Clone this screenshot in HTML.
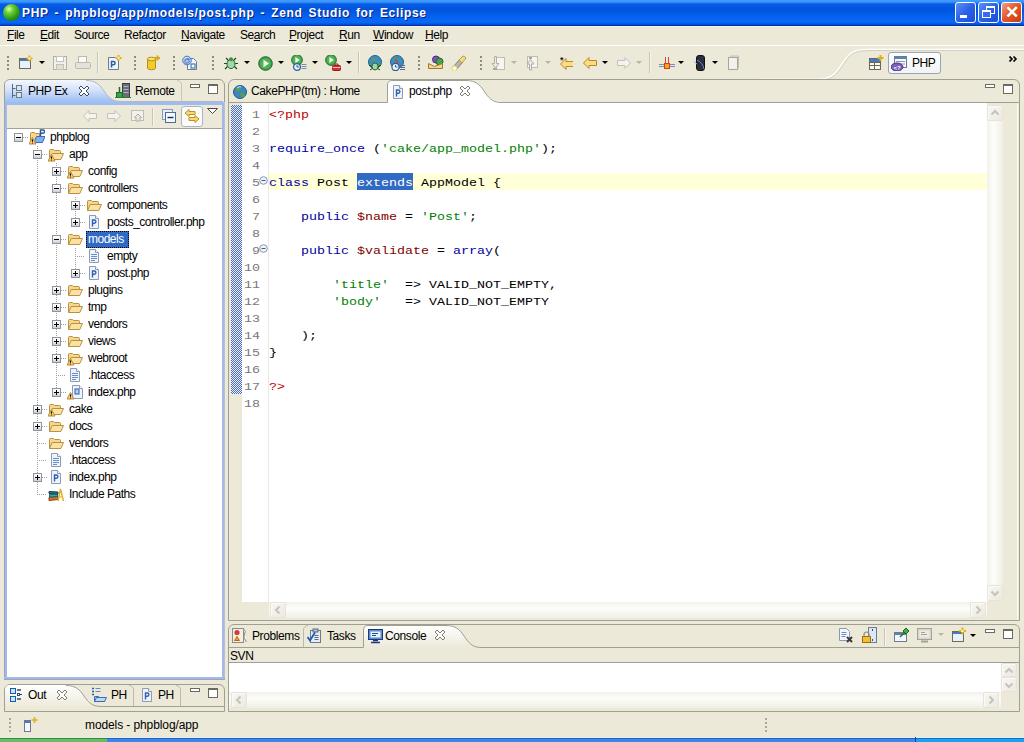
<!DOCTYPE html>
<html><head><meta charset="utf-8">
<style>
*{margin:0;padding:0;box-sizing:border-box}
html,body{width:1024px;height:742px;overflow:hidden;background:#ECE9D8;font-family:"Liberation Sans",sans-serif;font-size:12px;color:#000;position:relative}
.a{position:absolute}
.t{position:absolute;white-space:nowrap;line-height:14px;letter-spacing:-0.4px}
#title{left:0;top:0;width:1024px;height:26px;background:linear-gradient(#3d9dff 0,#3a95fc 2px,#0a5ce4 4px,#0054dc 10px,#0560ee 16px,#0a68f8 22px,#0458e4 24px,#0036a8 25.5px,#0030a0 26px)}
#title .tx{left:22px;top:6px;color:#fff;font-weight:bold;font-size:12px;letter-spacing:0.67px;word-spacing:2px;text-shadow:1px 1px 0 #0a1e80}
.wb{position:absolute;top:2px;width:21px;height:21px;border:1px solid #fff;border-radius:3px;background:linear-gradient(135deg,#5e8ff8,#2a62e6 50%,#1d4fd6)}
.menu .t{top:28px;font-size:12px;letter-spacing:-0.45px}
.u{text-decoration:underline}
.grip{position:absolute;width:2px;background:repeating-linear-gradient(#8e8b7c 0 2px,transparent 2px 4px)}
.vsep{position:absolute;width:2px;border-left:1px solid #c8c5b4;border-right:1px solid #f6f5ee}
.dd{position:absolute;width:0;height:0;border-left:3px solid transparent;border-right:3px solid transparent;border-top:3px solid #000}
.ddg{border-top-color:#b8b5a6}
.tree{font-size:12px;letter-spacing:-0.5px}
.exp{width:9px;height:9px;border:1px solid #8e949a;background:linear-gradient(#fff,#eef0f4 50%,#c8ccd4);}
.exp i{position:absolute;left:1px;top:3px;width:5px;height:1px;background:#000}
.exp b{position:absolute;left:3px;top:1px;width:1px;height:5px;background:#000}
.code{position:absolute;left:269px;font-family:"Liberation Mono",monospace;font-size:13.33px;line-height:17px;white-space:pre;color:#000;transform:scaleY(0.88);transform-origin:0 12px}
.ln{position:absolute;left:236px;width:24px;text-align:right;font-family:"Liberation Mono",monospace;font-size:13.33px;line-height:17px;color:#787878;transform:scaleY(0.88);transform-origin:0 12px}
.kw{color:#0000a0}.st{color:#008000}.vr{color:#800000}.tg{color:#c00000}
</style></head><body>

<!-- Title bar -->
<div id="title" class="a">
  <div class="a" style="left:3px;top:4px;width:17px;height:17px;border-radius:50%;background:radial-gradient(circle at 35% 30%,#d8ffb0 0,#6fd13a 25%,#2e9a12 60%,#0f5a05 100%)"></div>
  <div class="t tx">PHP - phpblog/app/models/post.php - Zend Studio for Eclipse</div>
  <div class="wb" style="left:955px"><div class="a" style="left:4px;top:12px;width:7px;height:3px;background:#fff"></div></div>
  <div class="wb" style="left:978px"><div class="a" style="left:7px;top:3px;width:9px;height:8px;border:1px solid #fff;border-top-width:2px"></div><div class="a" style="left:3px;top:7px;width:9px;height:8px;border:1px solid #fff;border-top-width:2px;background:#3a6bea"></div></div>
  <div class="wb" style="left:1001px;background:linear-gradient(135deg,#f0a080,#e55a2a 45%,#c83a10)"><div class="t" style="left:0;top:1px;width:19px;text-align:center;color:#fff;font-size:17px;font-weight:bold;line-height:18px">✕</div></div>
</div>

<!-- Menu -->
<div class="menu">
  <div class="t" style="left:7px"><span class="u">F</span>ile</div>
  <div class="t" style="left:40px"><span class="u">E</span>dit</div>
  <div class="t" style="left:74px">Source</div>
  <div class="t" style="left:124px">Refac<span class="u">t</span>or</div>
  <div class="t" style="left:181px"><span class="u">N</span>avigate</div>
  <div class="t" style="left:240px">Se<span class="u">a</span>rch</div>
  <div class="t" style="left:289px"><span class="u">P</span>roject</div>
  <div class="t" style="left:339px"><span class="u">R</span>un</div>
  <div class="t" style="left:373px"><span class="u">W</span>indow</div>
  <div class="t" style="left:425px"><span class="u">H</span>elp</div>
</div>
<div class="a" style="left:0;top:45px;width:1024px;height:1px;background:#fff"></div>
<div class="a" style="left:0;top:26px;width:1024px;height:1px;background:#f4f3ee"></div>

<!-- TOOLBAR -->
<div class="grip" style="left:7px;top:56px;height:14px"></div>
<svg class="a" style="left:18px;top:55px" width="16" height="16" viewBox="0 0 16 16"><rect x="1.5" y="3.5" width="11" height="10" fill="#e8f2fc" stroke="#6e6a58"/><rect x="2" y="4" width="10" height="2" fill="#4a7ab8"/><path d="M11.5,0.5 v6 M8.5,3.5 h6" stroke="#e0b020" stroke-width="2"/><circle cx="11.5" cy="3.5" r="1.2" fill="#fff6a0"/></svg>
<div class="dd" style="left:39px;top:61px"></div>
<svg class="a" style="left:52px;top:55px" width="16" height="16" viewBox="0 0 16 16"><rect x="1.5" y="1.5" width="13" height="13" fill="#f0efe8" stroke="#b4b2a8"/><rect x="4.5" y="1.5" width="7" height="5" fill="#fff" stroke="#c4c2b8"/><rect x="4.5" y="9.5" width="7" height="5" fill="#e0dfd6" stroke="#c4c2b8"/></svg>
<svg class="a" style="left:75px;top:55px" width="16" height="16" viewBox="0 0 16 16"><rect x="3.5" y="1.5" width="8" height="6" fill="#fafaf6" stroke="#bdbbb0"/><rect x="0.5" y="7.5" width="15" height="6" rx="1" fill="#e4e2da" stroke="#bdbbb0"/></svg>
<div class="vsep" style="left:97px;top:52px;height:21px"></div>
<svg class="a" style="left:106px;top:55px" width="16" height="16" viewBox="0 0 16 16"><path d="M2.5,2.5 h7 l3,3 v9 h-10 z" fill="#eef4fc" stroke="#6e7a90"/><path d="M5.5,12.5 V6.5 h2 a1.6,1.6 0 0 1 0,3.2 h-2" fill="none" stroke="#2d5ea8" stroke-width="1.5"/><path d="M12.5,0 v6 M9.5,3 h6" stroke="#e0b020" stroke-width="2"/><circle cx="12.5" cy="3" r="1.2" fill="#fff6a0"/></svg>
<div class="grip" style="left:134px;top:56px;height:14px"></div>
<svg class="a" style="left:145px;top:55px" width="16" height="16" viewBox="0 0 16 16"><path d="M2.5,4 v9 a4,1.8 0 0 0 8,0 v-9" fill="#f0cc30" stroke="#b89010"/><ellipse cx="6.5" cy="4" rx="4" ry="1.8" fill="#fae27a" stroke="#b89010"/><path d="M12.5,0.5 v5 M10,3 h5" stroke="#d8a818" stroke-width="2"/></svg>
<div class="grip" style="left:173px;top:56px;height:14px"></div>
<svg class="a" style="left:182px;top:55px" width="16" height="16" viewBox="0 0 16 16"><path d="M5.5,3.5 h6 l3,3 v8 h-9 z" fill="#f4f8fc" stroke="#6e7a90"/><rect x="9" y="9" width="4" height="4" fill="#fff" stroke="#2d5ea8"/><circle cx="5" cy="5.5" r="4.3" fill="#cfe2f8" stroke="#3a78c8"/><text x="5" y="8" font-size="7" font-family="Liberation Sans" text-anchor="middle" fill="#1a4a98">@</text></svg>
<div class="grip" style="left:212px;top:56px;height:14px"></div>
<svg class="a" style="left:223px;top:55px" width="16" height="16" viewBox="0 0 16 16"><path d="M3,3 l3,3 M13,3 l-3,3 M1,8.5 h3 M15,8.5 h-3 M2,14 l3,-3 M14,14 l-3,-3" stroke="#1e4a1e" stroke-width="1.2"/><ellipse cx="8" cy="9" rx="4" ry="4.6" fill="#9fd8a8" stroke="#2a6a2a"/><circle cx="8" cy="4.3" r="2" fill="#4a8a4a"/></svg>
<div class="dd" style="left:244px;top:61px"></div>
<svg class="a" style="left:258px;top:56px" width="16" height="16" viewBox="0 0 16 16"><circle cx="7.5" cy="7.5" r="6.8" fill="#3a9a40" stroke="#1f6a25"/><circle cx="7.5" cy="7.5" r="5.5" fill="#52b158"/><path d="M5.5,3.8 L11,7.5 L5.5,11.2 Z" fill="#f2fff0"/></svg>
<div class="dd" style="left:278px;top:61px"></div>
<svg class="a" style="left:291px;top:55px" width="16" height="16" viewBox="0 0 16 16"><g transform="translate(0,-1) scale(0.8)"><circle cx="7.5" cy="7.5" r="6.8" fill="#3a9a40" stroke="#1f6a25"/><circle cx="7.5" cy="7.5" r="5.5" fill="#52b158"/><path d="M5.5,3.8 L11,7.5 L5.5,11.2 Z" fill="#f2fff0"/></g><circle cx="6" cy="12" r="3.4" fill="#e8f4fc" stroke="#2d5a98" stroke-width="1.2"/><path d="M6,10 v2 h2" stroke="#2d5a98" fill="none"/><path d="M10.5,9.5 h5 M10.5,11.5 h5 M10.5,13.5 h5" stroke="#7890a8"/></svg>
<div class="dd" style="left:312px;top:61px"></div>
<svg class="a" style="left:325px;top:55px" width="16" height="16" viewBox="0 0 16 16"><g transform="translate(0,-1) scale(0.8)"><circle cx="7.5" cy="7.5" r="6.8" fill="#3a9a40" stroke="#1f6a25"/><circle cx="7.5" cy="7.5" r="5.5" fill="#52b158"/><path d="M5.5,3.8 L11,7.5 L5.5,11.2 Z" fill="#f2fff0"/></g><rect x="7.5" y="10.5" width="8" height="5" rx="1" fill="#d83030" stroke="#902020"/><path d="M10,10.5 v-1.5 h3 v1.5" fill="none" stroke="#902020"/><path d="M7.5,12.5 h8" stroke="#ffb0b0"/></svg>
<div class="dd" style="left:346px;top:61px"></div>
<div class="vsep" style="left:358px;top:52px;height:21px"></div>
<svg class="a" style="left:367px;top:55px" width="16" height="16" viewBox="0 0 16 16"><circle cx="8" cy="7" r="6.5" fill="#3d8ec0" stroke="#25608a"/><path d="M4,4 q3,-2 5,1 q-2,2 -4,1 z M9,8 q3,0 4,3 l-3,1 z" fill="#58a048"/><path d="M2,10 l3,2 M14,10 l-3,2 M3,15 l3,-2 M13,15 l-3,-2" stroke="#1e3a1e" stroke-width="1"/><ellipse cx="8" cy="11.5" rx="3" ry="3.5" fill="#9fd8a8" stroke="#2a6a2a"/></svg>
<svg class="a" style="left:389px;top:55px" width="16" height="16" viewBox="0 0 16 16"><circle cx="8" cy="7" r="6.5" fill="#3d8ec0" stroke="#25608a"/><path d="M4,4 q3,-2 5,1 q-2,2 -4,1 z" fill="#58a048"/><path d="M6,4 l3,4" stroke="#d04040" stroke-width="1.5"/><circle cx="6.5" cy="12" r="3.6" fill="#eaf4fc" stroke="#2d5a98" stroke-width="1.2"/><path d="M6.5,10 v2 h2" stroke="#2d5a98" fill="none"/><path d="M11,10.5 h5 M11,12.5 h5 M11,14.5 h5" stroke="#4a6a90"/></svg>
<div class="grip" style="left:418px;top:56px;height:14px"></div>
<svg class="a" style="left:428px;top:55px" width="16" height="16" viewBox="0 0 16 16"><circle cx="8" cy="4.5" r="3.5" fill="#7a5ab8" stroke="#4a2a80"/><circle cx="11.5" cy="6.5" r="3.5" fill="#4aa050" stroke="#206a28"/><path d="M0.5,8.5 l6,3 l8,-3 v5 h-14 z" fill="#f6d68f" stroke="#9a7a3a"/></svg>
<svg class="a" style="left:451px;top:55px" width="16" height="16" viewBox="0 0 16 16"><path d="M2,12 L9,4 L12,7 L5,15 Z" fill="#b8b4a8" stroke="#8a867a"/><path d="M8,5 L12,1 q2,0 3,2 L11,8 Z" fill="#f4d890" stroke="#c09a40"/><circle cx="3.5" cy="13.5" r="2.6" fill="#fffcc8" stroke="#d8d090"/></svg>
<div class="grip" style="left:480px;top:56px;height:14px"></div>
<svg class="a" style="left:490px;top:55px" width="16" height="16" viewBox="0 0 16 16"><rect x="6.5" y="2.5" width="8" height="12" fill="#f6f5f0" stroke="#c0beb4"/><path d="M4.5,1.5 v7 h-2.5 l3.5,4.5 l3.5,-4.5 h-2.5 v-7 z" fill="#ecebe4" stroke="#b2b0a6"/><rect x="3" y="13" width="4" height="2" fill="#aaa89e"/></svg>
<div class="dd ddg" style="left:511px;top:61px"></div>
<svg class="a" style="left:524px;top:55px" width="16" height="16" viewBox="0 0 16 16"><rect x="3.5" y="1.5" width="10" height="11" fill="#f6f5f0" stroke="#c0beb4"/><path d="M5.5,15 v-6 h-2.5 l3.5,-4.5 l3.5,4.5 h-2.5 v6 z" fill="#ecebe4" stroke="#b2b0a6"/><rect x="5" y="2" width="3" height="2" fill="#aaa89e"/></svg>
<div class="dd ddg" style="left:545px;top:61px"></div>
<svg class="a" style="left:557px;top:55px" width="16" height="16" viewBox="0 0 16 16"><g transform="translate(2,1)"><path d="M1.5,8 L7,2.5 V5.5 H14.5 V10.5 H7 V13.5 Z" fill="#fbdc80" stroke="#b8882a" stroke-linejoin="round"/></g><text x="3" y="8" font-size="9" font-family="Liberation Sans" font-weight="bold" fill="#222">*</text></svg>
<svg class="a" style="left:582px;top:55px" width="16" height="16" viewBox="0 0 16 16"><path d="M1.5,8 L7,2.5 V5.5 H14.5 V10.5 H7 V13.5 Z" fill="#fbdc80" stroke="#b8882a" stroke-linejoin="round"/></svg>
<div class="dd" style="left:602px;top:61px"></div>
<svg class="a" style="left:616px;top:55px" width="16" height="16" viewBox="0 0 16 16"><path d="M14.5,8 L9,2.5 V5.5 H1.5 V10.5 H9 V13.5 Z" fill="#f4f3ee" stroke="#c4c2b8" stroke-linejoin="round"/></svg>
<div class="dd ddg" style="left:636px;top:61px"></div>
<div class="vsep" style="left:649px;top:52px;height:21px"></div>
<svg class="a" style="left:659px;top:55px" width="16" height="16" viewBox="0 0 16 16"><path d="M6.5,2 v6 M9.5,2 v6" stroke="#e04040" stroke-width="1"/><path d="M0,9.5 h16 M0,11.5 h16" stroke="#7a8ab8" stroke-width="1"/><rect x="5.5" y="8.5" width="5" height="5" fill="#f8a020" stroke="#d04010"/></svg>
<div class="dd" style="left:678px;top:61px"></div>
<svg class="a" style="left:693px;top:55px" width="16" height="16" viewBox="0 0 16 16"><rect x="3.5" y="0.5" width="8" height="15" rx="2.5" fill="#2a2e3a" stroke="#101018"/><path d="M4,5 q6,3 7,9" stroke="#6a8ac8" fill="none"/><path d="M1,6 q1,2 3,3" stroke="#8ab0e8" fill="none"/></svg>
<div class="dd" style="left:712px;top:61px"></div>
<svg class="a" style="left:725px;top:55px" width="16" height="16" viewBox="0 0 16 16"><rect x="3.5" y="2.5" width="9" height="12" fill="#f2f1ec" stroke="#a8a69c"/><path d="M5.5,2.5 v-1.5 h8 v12 h-1" fill="none" stroke="#c0beb4"/></svg>
<svg class="a" style="left:760px;top:46px" width="264" height="34">
<path d="M0,33.5 H55 C72,33.5 75,28 82,18 C89,7 92,3.5 110,3.5 H264" fill="none" stroke="#fff" stroke-width="1.5"/>
<path d="M0,34.5 H55 C73,34.5 76,29 83,19 C90,8 93,4.5 110,4.5 H264" fill="none" stroke="#d2cfc0" stroke-width="1"/>
</svg>
<svg class="a" style="left:868px;top:55px" width="16" height="16" viewBox="0 0 16 16"><rect x="1.5" y="3.5" width="11" height="11" fill="#fffbf0" stroke="#6a6658"/><path d="M1.5,7.5 h11 M6.5,7.5 v7 M1.5,10.5 h11" stroke="#6a6658"/><rect x="2" y="4" width="10" height="3" fill="#4a7ab8"/><path d="M12.5,0 v6 M9.5,3 h6" stroke="#e0b020" stroke-width="2"/></svg>
<div class="a" style="left:888px;top:52px;width:53px;height:22px;border:1px solid #98a4b8;border-radius:3px;background:linear-gradient(#fdfdfd,#f2f3f6)"></div>
<svg class="a" style="left:891px;top:55px" width="16" height="16" viewBox="0 0 16 16"><rect x="3.5" y="1.5" width="12" height="11" fill="#f6f8fc" stroke="#6e7a90"/><rect x="4" y="2" width="11" height="2" fill="#5a82c0"/><path d="M5,6.5 h9 M5,9 h9" stroke="#8a9ab0"/><ellipse cx="6" cy="12" rx="6" ry="4" fill="#7a60b8" stroke="#4a3088"/><text x="6" y="14.5" font-size="6" font-family="Liberation Sans" font-weight="bold" text-anchor="middle" fill="#fff">&lt;?</text></svg>
<div class="t" style="left:912px;top:56px;font-size:12px">PHP</div>
<svg class="a" style="left:1009px;top:56px" width="10" height="6"><path d="M0.5,0.5 L3,3 L0.5,5.5 M4.5,0.5 L7,3 L4.5,5.5" fill="none" stroke="#000" stroke-width="1.6"/></svg>


<!-- LEFT PANEL -->
<div class="a" style="left:4px;top:79px;width:221px;height:601px;border:1px solid #a09f94;border-radius:6px 6px 0 0;background:#ECE9D8"></div>
<!-- active tab gradient -->
<svg class="a" style="left:5px;top:80px" width="218" height="25">
  <defs><linearGradient id="tabg" x1="0" y1="0" x2="0" y2="1"><stop offset="0" stop-color="#f4f8fe"/><stop offset="0.4" stop-color="#d4e2f8"/><stop offset="0.8" stop-color="#a4c4f6"/><stop offset="1" stop-color="#9cbcf2"/></linearGradient></defs>
  <path d="M0,25 L0,6 Q0,0 6,0 L81,0 C91,0 95,5 99,11 C103,17 107,21.5 116,21.5 L218,21.5 L218,25 L0,25 Z" fill="url(#tabg)"/>
  <path d="M81,0.5 C91,0.5 95,5 99,11 C103,17 107,21.5 116,21.5 L218,21.5" fill="none" stroke="#b0b8c8" stroke-width="1"/>
  <path d="M176.5,22 L176.5,5 Q176.5,1 172,0.5" fill="none" stroke="#c9c6b8" stroke-width="1"/>
</svg>
<div class="a" style="left:5px;top:102px;width:218px;height:3px;background:#9fbcee"></div>
<div class="a" style="left:4px;top:102px;width:3px;height:578px;background:linear-gradient(90deg,#98a4c4 1px,#a6b9e6 1px)"></div>
<div class="a" style="left:222px;top:102px;width:3px;height:578px;background:linear-gradient(90deg,#a6b9e6 2px,#b8c0d8 2px)"></div>
<div class="a" style="left:4px;top:677px;width:221px;height:3px;background:linear-gradient(#a6b9e6 2px,#98a4c4 2px)"></div>
<div class="a" style="left:7px;top:128px;width:215px;height:1px;background:#a5a294"></div>
<div class="a" style="left:7px;top:129px;width:215px;height:548px;background:#fff"></div>
<div class="t" style="left:28px;top:84px;font-size:12px">PHP Ex</div>
<div class="t" style="left:135px;top:84px;font-size:12px">Remote</div>



<!-- TREE -->
<div class="a" style="left:23px;top:137px;width:5px;height:1px;background:repeating-linear-gradient(90deg,#a0a0a0 0 1px,transparent 1px 2px)"></div>
<div class="a" style="left:42px;top:154px;width:5px;height:1px;background:repeating-linear-gradient(90deg,#a0a0a0 0 1px,transparent 1px 2px)"></div>
<div class="a" style="left:61px;top:171px;width:5px;height:1px;background:repeating-linear-gradient(90deg,#a0a0a0 0 1px,transparent 1px 2px)"></div>
<div class="a" style="left:61px;top:188px;width:5px;height:1px;background:repeating-linear-gradient(90deg,#a0a0a0 0 1px,transparent 1px 2px)"></div>
<div class="a" style="left:80px;top:205px;width:5px;height:1px;background:repeating-linear-gradient(90deg,#a0a0a0 0 1px,transparent 1px 2px)"></div>
<div class="a" style="left:80px;top:222px;width:5px;height:1px;background:repeating-linear-gradient(90deg,#a0a0a0 0 1px,transparent 1px 2px)"></div>
<div class="a" style="left:61px;top:239px;width:5px;height:1px;background:repeating-linear-gradient(90deg,#a0a0a0 0 1px,transparent 1px 2px)"></div>
<div class="a" style="left:75px;top:256px;width:10px;height:1px;background:repeating-linear-gradient(90deg,#a0a0a0 0 1px,transparent 1px 2px)"></div>
<div class="a" style="left:80px;top:273px;width:5px;height:1px;background:repeating-linear-gradient(90deg,#a0a0a0 0 1px,transparent 1px 2px)"></div>
<div class="a" style="left:61px;top:290px;width:5px;height:1px;background:repeating-linear-gradient(90deg,#a0a0a0 0 1px,transparent 1px 2px)"></div>
<div class="a" style="left:61px;top:307px;width:5px;height:1px;background:repeating-linear-gradient(90deg,#a0a0a0 0 1px,transparent 1px 2px)"></div>
<div class="a" style="left:61px;top:324px;width:5px;height:1px;background:repeating-linear-gradient(90deg,#a0a0a0 0 1px,transparent 1px 2px)"></div>
<div class="a" style="left:61px;top:341px;width:5px;height:1px;background:repeating-linear-gradient(90deg,#a0a0a0 0 1px,transparent 1px 2px)"></div>
<div class="a" style="left:61px;top:358px;width:5px;height:1px;background:repeating-linear-gradient(90deg,#a0a0a0 0 1px,transparent 1px 2px)"></div>
<div class="a" style="left:56px;top:375px;width:10px;height:1px;background:repeating-linear-gradient(90deg,#a0a0a0 0 1px,transparent 1px 2px)"></div>
<div class="a" style="left:61px;top:392px;width:5px;height:1px;background:repeating-linear-gradient(90deg,#a0a0a0 0 1px,transparent 1px 2px)"></div>
<div class="a" style="left:42px;top:409px;width:5px;height:1px;background:repeating-linear-gradient(90deg,#a0a0a0 0 1px,transparent 1px 2px)"></div>
<div class="a" style="left:42px;top:426px;width:5px;height:1px;background:repeating-linear-gradient(90deg,#a0a0a0 0 1px,transparent 1px 2px)"></div>
<div class="a" style="left:37px;top:443px;width:10px;height:1px;background:repeating-linear-gradient(90deg,#a0a0a0 0 1px,transparent 1px 2px)"></div>
<div class="a" style="left:37px;top:460px;width:10px;height:1px;background:repeating-linear-gradient(90deg,#a0a0a0 0 1px,transparent 1px 2px)"></div>
<div class="a" style="left:42px;top:477px;width:5px;height:1px;background:repeating-linear-gradient(90deg,#a0a0a0 0 1px,transparent 1px 2px)"></div>
<div class="a" style="left:37px;top:494px;width:10px;height:1px;background:repeating-linear-gradient(90deg,#a0a0a0 0 1px,transparent 1px 2px)"></div>
<div class="a" style="left:37px;top:146px;width:1px;height:348px;background:repeating-linear-gradient(#a0a0a0 0 1px,transparent 1px 2px)"></div>
<div class="a" style="left:56px;top:163px;width:1px;height:229px;background:repeating-linear-gradient(#a0a0a0 0 1px,transparent 1px 2px)"></div>
<div class="a" style="left:75px;top:197px;width:1px;height:25px;background:repeating-linear-gradient(#a0a0a0 0 1px,transparent 1px 2px)"></div>
<div class="a" style="left:75px;top:248px;width:1px;height:25px;background:repeating-linear-gradient(#a0a0a0 0 1px,transparent 1px 2px)"></div>
<div class="a exp" style="left:14px;top:133px"><i></i></div>
<div class="a exp" style="left:33px;top:150px"><i></i></div>
<div class="a exp" style="left:52px;top:167px"><i></i><b></b></div>
<div class="a exp" style="left:52px;top:184px"><i></i></div>
<div class="a exp" style="left:71px;top:201px"><i></i><b></b></div>
<div class="a exp" style="left:71px;top:218px"><i></i><b></b></div>
<div class="a exp" style="left:52px;top:235px"><i></i></div>
<div class="a exp" style="left:71px;top:269px"><i></i><b></b></div>
<div class="a exp" style="left:52px;top:286px"><i></i><b></b></div>
<div class="a exp" style="left:52px;top:303px"><i></i><b></b></div>
<div class="a exp" style="left:52px;top:320px"><i></i><b></b></div>
<div class="a exp" style="left:52px;top:337px"><i></i><b></b></div>
<div class="a exp" style="left:52px;top:354px"><i></i><b></b></div>
<div class="a exp" style="left:52px;top:388px"><i></i><b></b></div>
<div class="a exp" style="left:33px;top:405px"><i></i><b></b></div>
<div class="a exp" style="left:33px;top:422px"><i></i><b></b></div>
<div class="a exp" style="left:33px;top:473px"><i></i><b></b></div>
<svg class="a" style="left:29px;top:129px" width="16" height="16" viewBox="0 0 16 16"><path d="M1.5,13.5 V4.5 q0,-1 1,-1 h3 l1,1 h4 v3" fill="#f6d68f" stroke="#b9913f"/><path d="M5,13.5 L7.5,7.5 H16 L13.5,13.5 Z" fill="#7fb0f0" stroke="#3a6ab8" stroke-linejoin="round"/><path d="M11.5,7 V1 h2.5 a1.6,1.6 0 0 1 0,3.2 h-2.5" fill="none" stroke="#2b5a9a" stroke-width="1.5"/><path d="M3.5,8.5 L7,15 H0 Z" fill="#f6d070" stroke="#b8893a" stroke-width="1" stroke-linejoin="round"/><path d="M3.5,10.5 v2.2 M3.5,13.6 v0.8" stroke="#000" stroke-width="1"/></svg>
<div class="t tree" style="left:50px;top:130px">phpblog</div>
<svg class="a" style="left:48px;top:146px" width="16" height="16" viewBox="0 0 16 16"><path d="M1.5,13.5 V4.5 q0,-1 1,-1 h3 l1,1 h5 q1,0 1,1 v2" fill="#f6d68f" stroke="#b9913f"/><path d="M1.5,13.5 L4.2,7.5 H15.5 L12.8,13.5 Z" fill="#fbe2a4" stroke="#b9913f" stroke-linejoin="round"/><path d="M3.5,8.5 L7,15 H0 Z" fill="#f6d070" stroke="#b8893a" stroke-width="1" stroke-linejoin="round"/><path d="M3.5,10.5 v2.2 M3.5,13.6 v0.8" stroke="#000" stroke-width="1"/></svg>
<div class="t tree" style="left:69px;top:147px">app</div>
<svg class="a" style="left:67px;top:163px" width="16" height="16" viewBox="0 0 16 16"><path d="M1.5,13.5 V4.5 q0,-1 1,-1 h3 l1,1 h5 q1,0 1,1 v2" fill="#f6d68f" stroke="#b9913f"/><path d="M1.5,13.5 L4.2,7.5 H15.5 L12.8,13.5 Z" fill="#fbe2a4" stroke="#b9913f" stroke-linejoin="round"/><path d="M3.5,8.5 L7,15 H0 Z" fill="#f6d070" stroke="#b8893a" stroke-width="1" stroke-linejoin="round"/><path d="M3.5,10.5 v2.2 M3.5,13.6 v0.8" stroke="#000" stroke-width="1"/></svg>
<div class="t tree" style="left:88px;top:164px">config</div>
<svg class="a" style="left:67px;top:180px" width="16" height="16" viewBox="0 0 16 16"><path d="M1.5,13.5 V4.5 q0,-1 1,-1 h3 l1,1 h5 q1,0 1,1 v2" fill="#f6d68f" stroke="#b9913f"/><path d="M1.5,13.5 L4.2,7.5 H15.5 L12.8,13.5 Z" fill="#fbe2a4" stroke="#b9913f" stroke-linejoin="round"/></svg>
<div class="t tree" style="left:88px;top:181px">controllers</div>
<svg class="a" style="left:86px;top:197px" width="16" height="16" viewBox="0 0 16 16"><path d="M1.5,13.5 V4.5 q0,-1 1,-1 h3 l1,1 h5 q1,0 1,1 v2" fill="#f6d68f" stroke="#b9913f"/><path d="M1.5,13.5 L4.2,7.5 H15.5 L12.8,13.5 Z" fill="#fbe2a4" stroke="#b9913f" stroke-linejoin="round"/></svg>
<div class="t tree" style="left:107px;top:198px">components</div>
<svg class="a" style="left:86px;top:214px" width="16" height="16" viewBox="0 0 16 16"><path d="M3.5,1.5 h6 l3,3 v10 h-9 z" fill="#eef4fc" stroke="#8d9cb4"/><path d="M9.5,1.5 v3 h3" fill="#fff" stroke="#8d9cb4"/><path d="M6.5,12.5 V6 h1.8 a1.6,1.6 0 0 1 0,3.2 h-1.8" fill="none" stroke="#3060b0" stroke-width="1.4"/></svg>
<div class="t tree" style="left:107px;top:215px">posts_controller.php</div>
<svg class="a" style="left:67px;top:231px" width="16" height="16" viewBox="0 0 16 16"><path d="M1.5,13.5 V4.5 q0,-1 1,-1 h3 l1,1 h5 q1,0 1,1 v2" fill="#f6d68f" stroke="#b9913f"/><path d="M1.5,13.5 L4.2,7.5 H15.5 L12.8,13.5 Z" fill="#fbe2a4" stroke="#b9913f" stroke-linejoin="round"/></svg>
<div class="a" style="left:86px;top:231px;width:43px;height:17px;background:#316ac5;outline:1px dotted #000;outline-offset:-1px"></div>
<div class="t tree" style="left:88px;top:232px;color:#fff">models</div>
<svg class="a" style="left:86px;top:248px" width="16" height="16" viewBox="0 0 16 16"><path d="M3.5,1.5 h6 l3,3 v10 h-9 z" fill="#eef4fc" stroke="#8d9cb4"/><path d="M9.5,1.5 v3 h3" fill="#fff" stroke="#8d9cb4"/><path d="M5,6.5 h6 M5,8.5 h6 M5,10.5 h6 M5,12.5 h4" stroke="#6a8ccc" stroke-width="1"/></svg>
<div class="t tree" style="left:107px;top:249px">empty</div>
<svg class="a" style="left:86px;top:265px" width="16" height="16" viewBox="0 0 16 16"><path d="M3.5,1.5 h6 l3,3 v10 h-9 z" fill="#eef4fc" stroke="#8d9cb4"/><path d="M9.5,1.5 v3 h3" fill="#fff" stroke="#8d9cb4"/><path d="M6.5,12.5 V6 h1.8 a1.6,1.6 0 0 1 0,3.2 h-1.8" fill="none" stroke="#3060b0" stroke-width="1.4"/></svg>
<div class="t tree" style="left:107px;top:266px">post.php</div>
<svg class="a" style="left:67px;top:282px" width="16" height="16" viewBox="0 0 16 16"><path d="M1.5,13.5 V4.5 q0,-1 1,-1 h3 l1,1 h5 q1,0 1,1 v2" fill="#f6d68f" stroke="#b9913f"/><path d="M1.5,13.5 L4.2,7.5 H15.5 L12.8,13.5 Z" fill="#fbe2a4" stroke="#b9913f" stroke-linejoin="round"/></svg>
<div class="t tree" style="left:88px;top:283px">plugins</div>
<svg class="a" style="left:67px;top:299px" width="16" height="16" viewBox="0 0 16 16"><path d="M1.5,13.5 V4.5 q0,-1 1,-1 h3 l1,1 h5 q1,0 1,1 v2" fill="#f6d68f" stroke="#b9913f"/><path d="M1.5,13.5 L4.2,7.5 H15.5 L12.8,13.5 Z" fill="#fbe2a4" stroke="#b9913f" stroke-linejoin="round"/></svg>
<div class="t tree" style="left:88px;top:300px">tmp</div>
<svg class="a" style="left:67px;top:316px" width="16" height="16" viewBox="0 0 16 16"><path d="M1.5,13.5 V4.5 q0,-1 1,-1 h3 l1,1 h5 q1,0 1,1 v2" fill="#f6d68f" stroke="#b9913f"/><path d="M1.5,13.5 L4.2,7.5 H15.5 L12.8,13.5 Z" fill="#fbe2a4" stroke="#b9913f" stroke-linejoin="round"/></svg>
<div class="t tree" style="left:88px;top:317px">vendors</div>
<svg class="a" style="left:67px;top:333px" width="16" height="16" viewBox="0 0 16 16"><path d="M1.5,13.5 V4.5 q0,-1 1,-1 h3 l1,1 h5 q1,0 1,1 v2" fill="#f6d68f" stroke="#b9913f"/><path d="M1.5,13.5 L4.2,7.5 H15.5 L12.8,13.5 Z" fill="#fbe2a4" stroke="#b9913f" stroke-linejoin="round"/></svg>
<div class="t tree" style="left:88px;top:334px">views</div>
<svg class="a" style="left:67px;top:350px" width="16" height="16" viewBox="0 0 16 16"><path d="M1.5,13.5 V4.5 q0,-1 1,-1 h3 l1,1 h5 q1,0 1,1 v2" fill="#f6d68f" stroke="#b9913f"/><path d="M1.5,13.5 L4.2,7.5 H15.5 L12.8,13.5 Z" fill="#fbe2a4" stroke="#b9913f" stroke-linejoin="round"/><path d="M3.5,8.5 L7,15 H0 Z" fill="#f6d070" stroke="#b8893a" stroke-width="1" stroke-linejoin="round"/><path d="M3.5,10.5 v2.2 M3.5,13.6 v0.8" stroke="#000" stroke-width="1"/></svg>
<div class="t tree" style="left:88px;top:351px">webroot</div>
<svg class="a" style="left:67px;top:367px" width="16" height="16" viewBox="0 0 16 16"><path d="M3.5,1.5 h6 l3,3 v10 h-9 z" fill="#eef4fc" stroke="#8d9cb4"/><path d="M9.5,1.5 v3 h3" fill="#fff" stroke="#8d9cb4"/><path d="M5,6.5 h6 M5,8.5 h6 M5,10.5 h6 M5,12.5 h4" stroke="#6a8ccc" stroke-width="1"/></svg>
<div class="t tree" style="left:88px;top:368px">.htaccess</div>
<svg class="a" style="left:67px;top:384px" width="16" height="16" viewBox="0 0 16 16"><path d="M5.5,1.5 h7 l3,3 v10 h-10 z" fill="#eef4fc" stroke="#8d9cb4"/><path d="M12.5,1.5 v3 h3" fill="#fff" stroke="#8d9cb4"/><rect x="8" y="5" width="4" height="5" fill="#b8d0f0" stroke="#2d5ea8"/><path d="M3.5,8.5 L7,15 H0 Z" fill="#f6d070" stroke="#b8893a" stroke-width="1" stroke-linejoin="round"/><path d="M3.5,10.5 v2.2 M3.5,13.6 v0.8" stroke="#000" stroke-width="1"/></svg>
<div class="t tree" style="left:88px;top:385px">index.php</div>
<svg class="a" style="left:48px;top:401px" width="16" height="16" viewBox="0 0 16 16"><path d="M1.5,13.5 V4.5 q0,-1 1,-1 h3 l1,1 h5 q1,0 1,1 v2" fill="#f6d68f" stroke="#b9913f"/><path d="M1.5,13.5 L4.2,7.5 H15.5 L12.8,13.5 Z" fill="#fbe2a4" stroke="#b9913f" stroke-linejoin="round"/><path d="M3.5,8.5 L7,15 H0 Z" fill="#f6d070" stroke="#b8893a" stroke-width="1" stroke-linejoin="round"/><path d="M3.5,10.5 v2.2 M3.5,13.6 v0.8" stroke="#000" stroke-width="1"/></svg>
<div class="t tree" style="left:69px;top:402px">cake</div>
<svg class="a" style="left:48px;top:418px" width="16" height="16" viewBox="0 0 16 16"><path d="M1.5,13.5 V4.5 q0,-1 1,-1 h3 l1,1 h5 q1,0 1,1 v2" fill="#f6d68f" stroke="#b9913f"/><path d="M1.5,13.5 L4.2,7.5 H15.5 L12.8,13.5 Z" fill="#fbe2a4" stroke="#b9913f" stroke-linejoin="round"/></svg>
<div class="t tree" style="left:69px;top:419px">docs</div>
<svg class="a" style="left:48px;top:435px" width="16" height="16" viewBox="0 0 16 16"><path d="M1.5,13.5 V4.5 q0,-1 1,-1 h3 l1,1 h5 q1,0 1,1 v2" fill="#f6d68f" stroke="#b9913f"/><path d="M1.5,13.5 L4.2,7.5 H15.5 L12.8,13.5 Z" fill="#fbe2a4" stroke="#b9913f" stroke-linejoin="round"/></svg>
<div class="t tree" style="left:69px;top:436px">vendors</div>
<svg class="a" style="left:48px;top:452px" width="16" height="16" viewBox="0 0 16 16"><path d="M3.5,1.5 h6 l3,3 v10 h-9 z" fill="#eef4fc" stroke="#8d9cb4"/><path d="M9.5,1.5 v3 h3" fill="#fff" stroke="#8d9cb4"/><path d="M5,6.5 h6 M5,8.5 h6 M5,10.5 h6 M5,12.5 h4" stroke="#6a8ccc" stroke-width="1"/></svg>
<div class="t tree" style="left:69px;top:453px">.htaccess</div>
<svg class="a" style="left:48px;top:469px" width="16" height="16" viewBox="0 0 16 16"><path d="M3.5,1.5 h6 l3,3 v10 h-9 z" fill="#eef4fc" stroke="#8d9cb4"/><path d="M9.5,1.5 v3 h3" fill="#fff" stroke="#8d9cb4"/><path d="M6.5,12.5 V6 h1.8 a1.6,1.6 0 0 1 0,3.2 h-1.8" fill="none" stroke="#3060b0" stroke-width="1.4"/></svg>
<div class="t tree" style="left:69px;top:470px">index.php</div>
<svg class="a" style="left:48px;top:486px" width="16" height="16" viewBox="0 0 16 16"><path d="M1,11.5 l9,-1 v3 l-9,1 z" fill="#d8742c" stroke="#8a4010"/><path d="M1.5,8.5 l8,-0.5 v2.5 l-8,0.5 z" fill="#38a8a0" stroke="#1a6a60"/><path d="M1,5.5 l9,0.5 v2 l-9,-0.5 z" fill="#247888" stroke="#124450"/><path d="M10,15 L12.5,3 L15.5,15" fill="none" stroke="#e0b030" stroke-width="1.5"/><path d="M11,11 h4" stroke="#e0b030"/></svg>
<div class="t tree" style="left:69px;top:487px">Include Paths</div>
<!-- EDITOR -->
<div class="a" style="left:228px;top:79px;width:792px;height:542px;border:1px solid #a09f94;border-radius:6px 6px 0 0;background:#ECE9D8"></div>
<svg class="a" style="left:229px;top:80px" width="790" height="23">
  <path d="M158,23 L158,5 Q158,0 163,0 L237,0 C247,0 251,5 255,11 C259,17 263,21.5 272,21.5 L272,23 Z" fill="#fff"/>
  <path d="M0,22.5 L158.5,22.5 L158.5,5 Q158.5,0.5 163,0.5 L237,0.5 C247,0.5 251,5 255,11 C259,17 263,22.5 272,22.5 L790,22.5" fill="none" stroke="#a09f94" stroke-width="1"/>
</svg>
<div class="a" style="left:229px;top:103px;width:790px;height:517px;background:#ECE9D8"></div>
<div class="a" style="left:229px;top:103px;width:758px;height:499px;background:#fff"></div>
<div class="a" style="left:229px;top:103px;width:13px;height:499px;background:#ECE9D8"></div>
<div class="a" style="left:231px;top:105px;width:11px;height:289px;background:repeating-conic-gradient(#4a6cc0 0 25%,#eef1f8 0 50%) 0 0/2px 2px"></div>
<div class="a" style="left:268px;top:103px;width:1px;height:499px;background:#e8e8e8"></div>
<!-- v scroll -->
<div class="a" style="left:1017px;top:103px;width:1px;height:517px;background:#fbfaf0"></div>
<div class="a" style="left:987px;top:105px;width:16px;height:496px;background:linear-gradient(90deg,#f3f1ea,#fdfdfb 40%,#f0efe6)"></div>
<!-- h scroll -->
<div class="a" style="left:269px;top:602px;width:718px;height:16px;background:linear-gradient(#f3f1ea,#fdfdfb 40%,#f0efe6)"></div>
<div class="t" style="left:251px;top:84px;font-size:12px">CakePHP(tm) : Home</div>
<div class="t" style="left:409px;top:84px;font-size:12px">post.php</div>



<div class="a" style="left:269px;top:173px;width:718px;height:17px;background:#ffffd8"></div>
<div class="a" style="left:357px;top:173px;width:56px;height:17px;background:#316ac5"></div>
<div class="ln" style="top:106px">1</div>
<div class="code" style="top:106px"><span class="tg">&lt;?php</span></div>
<div class="ln" style="top:123px">2</div>
<div class="ln" style="top:140px">3</div>
<div class="code" style="top:140px"><span class="kw">require_once</span> (<span class="st">'cake/app_model.php'</span>);</div>
<div class="ln" style="top:157px">4</div>
<div class="ln" style="top:174px">5</div>
<div class="code" style="top:174px"><span class="kw">class</span> Post <span style="color:#fff">extends</span> AppModel {</div>
<div class="ln" style="top:191px">6</div>
<div class="ln" style="top:208px">7</div>
<div class="code" style="top:208px">    <span class="kw">public</span> <span class="vr">$name</span> = <span class="st">'Post'</span>;</div>
<div class="ln" style="top:225px">8</div>
<div class="ln" style="top:242px">9</div>
<div class="code" style="top:242px">    <span class="kw">public</span> <span class="vr">$validate</span> = <span class="kw">array</span>(</div>
<div class="ln" style="top:259px">10</div>
<div class="ln" style="top:276px">11</div>
<div class="code" style="top:276px">        <span class="st">'title'</span>  =&gt; VALID_NOT_EMPTY,</div>
<div class="ln" style="top:293px">12</div>
<div class="code" style="top:293px">        <span class="st">'body'</span>   =&gt; VALID_NOT_EMPTY</div>
<div class="ln" style="top:310px">13</div>
<div class="ln" style="top:327px">14</div>
<div class="code" style="top:327px">    );</div>
<div class="ln" style="top:344px">15</div>
<div class="code" style="top:344px">}</div>
<div class="ln" style="top:361px">16</div>
<div class="ln" style="top:378px">17</div>
<div class="code" style="top:378px"><span class="tg">?&gt;</span></div>
<div class="ln" style="top:395px">18</div>
<!-- BOTTOM PANEL -->
<div class="a" style="left:228px;top:624px;width:792px;height:88px;border:1px solid #a09f94;border-radius:6px 6px 0 0;background:#ECE9D8"></div>
<svg class="a" style="left:229px;top:625px" width="790" height="23">
  <defs><linearGradient id="tabw" x1="0" y1="0" x2="0" y2="1"><stop offset="0" stop-color="#ffffff"/><stop offset="1" stop-color="#ECE9D8"/></linearGradient></defs>
  <path d="M134,23 L134,5 Q134,0 139,0 L217,0 C227,0 231,5 235,11 C239,17 243,21.5 252,21.5 L252,23 Z" fill="url(#tabw)"/>
  <path d="M0,22.5 L134.5,22.5 L134.5,5 Q134.5,0.5 139,0.5 L217,0.5 C227,0.5 231,5 235,11 C239,17 243,22.5 252,22.5 L790,22.5" fill="none" stroke="#a09f94" stroke-width="1"/>
  <path d="M74.5,22 L74.5,5 Q74.5,1 79,0.5" fill="none" stroke="#bdbaa8" stroke-width="1"/>
</svg>
<div class="a" style="left:229px;top:662px;width:790px;height:1px;background:#a09f94"></div>
<div class="a" style="left:229px;top:663px;width:790px;height:47px;background:#ECE9D8"></div>
<div class="a" style="left:229px;top:663px;width:772px;height:29px;background:#fff"></div>
<div class="a" style="left:229px;top:692px;width:772px;height:16px;background:linear-gradient(#f3f1ea,#fdfdfb 40%,#f0efe6)"></div>
<div class="a" style="left:1001px;top:663px;width:16px;height:29px;background:linear-gradient(90deg,#f3f1ea,#fdfdfb 40%,#f0efe6)"></div>
<div class="t" style="left:252px;top:629px;font-size:12px">Problems</div>
<div class="t" style="left:327px;top:629px;font-size:12px">Tasks</div>
<div class="t" style="left:385px;top:629px;font-size:12px">Console</div>
<div class="t" style="left:230px;top:649px;font-size:12px">SVN</div>
<!-- OUT PANEL -->
<div class="a" style="left:4px;top:684px;width:221px;height:28px;border:1px solid #a09f94;border-radius:6px 6px 0 0;background:#ECE9D8"></div>
<svg class="a" style="left:5px;top:685px" width="219" height="23">
  <path d="M0,23 L0,5 Q0,0 5,0 L61,0 C71,0 75,5 79,11 C83,17 87,21.5 96,21.5 L96,23 Z" fill="url(#tabw)"/>
  <path d="M61,0.5 C71,0.5 75,5 79,11 C83,17 87,21.5 96,21.5 L219,21.5" fill="none" stroke="#a09f94" stroke-width="1"/>
  <path d="M128.5,21 L128.5,5 Q128.5,1 124,0.5" fill="none" stroke="#bdbaa8" stroke-width="1"/>
  <path d="M175.5,21 L175.5,5 Q175.5,1 171,0.5" fill="none" stroke="#bdbaa8" stroke-width="1"/>
</svg>
<div class="t" style="left:28px;top:688px;font-size:12px">Out</div>
<div class="t" style="left:111px;top:688px;font-size:12px">PH</div>
<div class="t" style="left:158px;top:688px;font-size:12px">PH</div>



<svg class="a" style="left:10px;top:83px" width="16" height="16" viewBox="0 0 16 16"><path d="M2.5,1 v14 M2.5,5.5 h3 M2.5,12.5 h3" stroke="#5a6a7a"/><rect x="6.5" y="2.5" width="5" height="5" fill="#dde4ec" stroke="#6a7a8a"/><rect x="6.5" y="9.5" width="5" height="5" fill="#dde4ec" stroke="#6a7a8a"/></svg>
<svg class="a" style="left:78px;top:85px" width="12" height="12"><path d="M1,3 L3,1 L6,4 L9,1 L11,3 L8,6 L11,9 L9,11 L6,8 L3,11 L1,9 L4,6 Z" fill="#fff" stroke="#3c4a5c" stroke-width="1" stroke-linejoin="round"/></svg>
<svg class="a" style="left:115px;top:83px" width="16" height="16" viewBox="0 0 16 16"><rect x="7.5" y="0.5" width="7" height="14" fill="#6a6e78" stroke="#3a3e48"/><path d="M8.5,3.5 h5 M8.5,6.5 h5 M8.5,9.5 h5" stroke="#b0b4c0"/><rect x="1.5" y="9.5" width="6" height="5" fill="#3aa050" stroke="#1a6a28"/><path d="M4.5,9 v-5" stroke="#1a6a28" stroke-width="1.5"/><path d="M0,14.5 h16" stroke="#2a7a38"/></svg>
<div class="a" style="left:190px;top:84px;width:10px;height:4px;border:1px solid #6a6a60;background:#fff"></div>
<div class="a" style="left:208px;top:84px;width:10px;height:10px;border:1px solid #6a6a60;border-top-width:2px;background:#fff"></div>
<svg class="a" style="left:82px;top:108px" width="16" height="16" viewBox="0 0 16 16"><path d="M1.5,8 L7,2.5 V5.5 H14.5 V10.5 H7 V13.5 Z" fill="#f4f3ee" stroke="#c4c2b8" stroke-linejoin="round"/></svg>
<svg class="a" style="left:106px;top:108px" width="16" height="16" viewBox="0 0 16 16"><path d="M14.5,8 L9,2.5 V5.5 H1.5 V10.5 H9 V13.5 Z" fill="#f4f3ee" stroke="#c4c2b8" stroke-linejoin="round"/></svg>
<svg class="a" style="left:130px;top:108px" width="16" height="16" viewBox="0 0 16 16"><rect x="1.5" y="2.5" width="12" height="10" fill="#f2f1ec" stroke="#c0beb4"/><path d="M4,10 l4,-4 l4,4 M6,9 v4 h4 v-4" fill="#e8e6de" stroke="#b0aea4"/></svg>
<div class="vsep" style="left:152px;top:108px;height:18px"></div>
<svg class="a" style="left:161px;top:108px" width="16" height="16" viewBox="0 0 16 16"><rect x="1.5" y="1.5" width="10" height="10" fill="#e8eef8" stroke="#8a9ab8"/><rect x="4.5" y="4.5" width="10" height="10" fill="#f4f8fc" stroke="#4a6aa0"/><path d="M6.5,9.5 h6" stroke="#1a2a5a" stroke-width="1.4"/></svg>
<div class="a" style="left:181px;top:106px;width:22px;height:21px;border:1px solid #a8b4c8;border-radius:3px;background:#fbfbfa"></div>
<svg class="a" style="left:184px;top:108px" width="16" height="16" viewBox="0 0 16 16"><path d="M1,5 L5,1.5 V3.5 H11 V6.5 H5 V8.5 Z" fill="#fbd870" stroke="#c09020" stroke-linejoin="round"/><path d="M15,11 L11,7.5 V9.5 H5 V12.5 H11 V14.5 Z" fill="#fbd870" stroke="#c09020" stroke-linejoin="round"/></svg>
<svg class="a" style="left:207px;top:108px" width="11" height="7"><path d="M0.5,0.5 H10.5 L5.5,5.5 Z" fill="#fff" stroke="#4a4a44"/></svg>
<svg class="a" style="left:232px;top:84px" width="16" height="16" viewBox="0 0 16 16"><circle cx="8" cy="8" r="6.5" fill="#3a86c0" stroke="#2a5a88"/><path d="M3,5 q3,-3 6,0 q-1,3 -4,2 z M8,9 q4,-1 5,3 q-2,2 -4,1 z" fill="#5aa048"/><path d="M5,4 q2,-2 4,-1" stroke="#c8e8ff" fill="none"/></svg>
<svg class="a" style="left:390px;top:84px" width="16" height="16" viewBox="0 0 16 16"><path d="M3.5,1.5 h6 l3,3 v10 h-9 z" fill="#eef4fc" stroke="#8d9cb4"/><path d="M9.5,1.5 v3 h3" fill="#fff" stroke="#8d9cb4"/><path d="M6.5,12.5 V6 h1.8 a1.6,1.6 0 0 1 0,3.2 h-1.8" fill="none" stroke="#3060b0" stroke-width="1.4"/></svg>
<svg class="a" style="left:459px;top:85px" width="12" height="12"><path d="M1,3 L3,1 L6,4 L9,1 L11,3 L8,6 L11,9 L9,11 L6,8 L3,11 L1,9 L4,6 Z" fill="#fff" stroke="#7c7c74" stroke-width="1" stroke-linejoin="round"/></svg>
<div class="a" style="left:985px;top:84px;width:10px;height:4px;border:1px solid #6a6a60;background:#fff"></div>
<div class="a" style="left:1003px;top:84px;width:10px;height:10px;border:1px solid #6a6a60;border-top-width:2px;background:#fff"></div>
<svg class="a" style="left:259px;top:176px" width="9" height="9"><circle cx="4.5" cy="4.5" r="3.8" fill="#f0f4fa" stroke="#8898b8"/><path d="M2.5,4.5 h4" stroke="#4a5a7a"/></svg>
<svg class="a" style="left:259px;top:244px" width="9" height="9"><circle cx="4.5" cy="4.5" r="3.8" fill="#f0f4fa" stroke="#8898b8"/><path d="M2.5,4.5 h4" stroke="#4a5a7a"/></svg>
<svg class="a" style="left:232px;top:628px" width="16" height="16" viewBox="0 0 16 16"><rect x="0.5" y="0.5" width="11" height="14" fill="#f4f0e0" stroke="#8a8a8a"/><circle cx="5" cy="4.5" r="2.6" fill="#d83a3a"/><path d="M2.5,12.5 l2.5,-4 l2.5,4 z" fill="#f0a030" stroke="#c06010"/><path d="M11.5,1 q3,2 1,5 q-2,3 2,8" fill="#fff" stroke="#8a8a8a"/></svg>
<svg class="a" style="left:307px;top:628px" width="16" height="16" viewBox="0 0 16 16"><rect x="3.5" y="2.5" width="10" height="12" fill="#e8ecf4" stroke="#6a7a90"/><rect x="6" y="1" width="5" height="3" fill="#b8c0d0" stroke="#5a6a80"/><path d="M7.5,7.5 h4 M7.5,9.5 h4 M7.5,11.5 h4" stroke="#5a6a80"/><path d="M0.5,9 l2.5,3.5 l5,-8" fill="none" stroke="#1a5ab8" stroke-width="1.8"/></svg>
<svg class="a" style="left:368px;top:628px" width="16" height="16" viewBox="0 0 16 16"><rect x="0.5" y="1.5" width="14" height="10" fill="#5a8ad0" stroke="#1a3a78"/><rect x="2.5" y="3.5" width="10" height="6" fill="#e8f0fc"/><path d="M4,5.5 h6 M4,7.5 h4" stroke="#2a4a88"/><path d="M5,12.5 h5 M3,14.5 h9" stroke="#1a3a78" stroke-width="1.5"/></svg>
<svg class="a" style="left:434px;top:629px" width="12" height="12"><path d="M1,3 L3,1 L6,4 L9,1 L11,3 L8,6 L11,9 L9,11 L6,8 L3,11 L1,9 L4,6 Z" fill="#fff" stroke="#7c7c74" stroke-width="1" stroke-linejoin="round"/></svg>
<svg class="a" style="left:838px;top:627px" width="16" height="16" viewBox="0 0 16 16"><path d="M1.5,1.5 h7 l3,3 v9 h-10 z" fill="#f4f8fc" stroke="#8a9ab0"/><path d="M3.5,5.5 h5 M3.5,7.5 h5 M3.5,9.5 h4" stroke="#6a8ccc"/><path d="M9,10 l5,5 M14,10 l-5,5" stroke="#3a3a3a" stroke-width="2"/></svg>
<svg class="a" style="left:861px;top:627px" width="16" height="16" viewBox="0 0 16 16"><rect x="7.5" y="0.5" width="8" height="15" fill="#dce6f4" stroke="#6a7a90"/><path d="M11.5,2 v2 M11.5,12 v2" stroke="#3a4a6a"/><rect x="1.5" y="9.5" width="8" height="6" fill="#f0c030" stroke="#9a7010"/><path d="M3,9.5 v-2 a2.5,2.5 0 0 1 5,0 v2" fill="none" stroke="#8a8a80" stroke-width="1.2"/></svg>
<div class="vsep" style="left:884px;top:628px;height:18px"></div>
<svg class="a" style="left:893px;top:627px" width="16" height="16" viewBox="0 0 16 16"><rect x="1.5" y="5.5" width="12" height="9" fill="#f4f8fc" stroke="#6e7a90"/><rect x="2" y="6" width="11" height="2" fill="#5a82c0"/><path d="M7,10 l5,-5" stroke="#2a6a2a" stroke-width="1.5"/><path d="M10,4 l3,-3 l3,3 l-3,3 z" fill="#40b040" stroke="#1a6a1a"/></svg>
<svg class="a" style="left:917px;top:628px" width="16" height="16" viewBox="0 0 16 16"><rect x="0.5" y="0.5" width="14" height="11" fill="#d8d6cc" stroke="#a4a298"/><rect x="2.5" y="2.5" width="10" height="7" fill="#eceae2"/><path d="M4,4.5 h4 M4,6.5 h6" stroke="#a4a298"/><path d="M4,13.5 h7" stroke="#a4a298" stroke-width="2"/></svg>
<div class="dd ddg" style="left:938px;top:633px"></div>
<svg class="a" style="left:951px;top:627px" width="16" height="16" viewBox="0 0 16 16"><rect x="1.5" y="4.5" width="11" height="10" fill="#e8f2fc" stroke="#6e6a58"/><rect x="2" y="5" width="10" height="2" fill="#4a7ab8"/><path d="M11.5,0.5 v7 M8,4 h7" stroke="#e0b020" stroke-width="2"/><circle cx="11.5" cy="4" r="1.3" fill="#fff6a0"/></svg>
<div class="dd" style="left:970px;top:634px"></div>
<div class="a" style="left:985px;top:629px;width:10px;height:4px;border:1px solid #6a6a60;background:#fff"></div>
<div class="a" style="left:1003px;top:629px;width:10px;height:10px;border:1px solid #6a6a60;border-top-width:2px;background:#fff"></div>
<svg class="a" style="left:9px;top:687px" width="16" height="16" viewBox="0 0 16 16"><rect x="1.5" y="1.5" width="5" height="5" fill="#c8e4fc" stroke="#1a5aa8"/><rect x="1.5" y="9.5" width="5" height="5" fill="#c8e4fc" stroke="#1a5aa8"/><path d="M8,3 h4 M8,12 h4" stroke="#2a4a7a" stroke-width="1.5"/><rect x="8.5" y="6.5" width="2" height="2" fill="#fff" stroke="#2a4a7a"/><path d="M11,7.5 h2" stroke="#2a4a7a"/></svg>
<svg class="a" style="left:56px;top:689px" width="12" height="12"><path d="M1,3 L3,1 L6,4 L9,1 L11,3 L8,6 L11,9 L9,11 L6,8 L3,11 L1,9 L4,6 Z" fill="#fff" stroke="#7c7c74" stroke-width="1" stroke-linejoin="round"/></svg>
<svg class="a" style="left:91px;top:687px" width="16" height="16" viewBox="0 0 16 16"><path d="M1,1.5 h2 M1,4.5 h2 M1,7.5 h2" stroke="#2a5aa8" stroke-width="1.5"/><path d="M4.5,1.5 h5 M4.5,4.5 h5" stroke="#6a8ab8"/><path d="M3.5,9.5 h4 l1,1 h5 v4 h-10 z" fill="#a8c8f0" stroke="#3a6ab0"/><path d="M3.5,14.5 l2,-4 h10 l-2,4 z" fill="#c0d8f8" stroke="#3a6ab0"/></svg>
<svg class="a" style="left:139px;top:687px" width="16" height="16" viewBox="0 0 16 16"><path d="M3.5,1.5 h6 l3,3 v10 h-9 z" fill="#eef4fc" stroke="#8d9cb4"/><path d="M9.5,1.5 v3 h3" fill="#fff" stroke="#8d9cb4"/><path d="M6.5,12.5 V6 h1.8 a1.6,1.6 0 0 1 0,3.2 h-1.8" fill="none" stroke="#3060b0" stroke-width="1.4"/></svg>
<div class="a" style="left:190px;top:688px;width:10px;height:4px;border:1px solid #6a6a60;background:#fff"></div>
<div class="a" style="left:208px;top:688px;width:10px;height:10px;border:1px solid #6a6a60;border-top-width:2px;background:#fff"></div>
<svg class="a" style="left:23px;top:716px" width="16" height="16" viewBox="0 0 16 16"><rect x="1.5" y="4.5" width="6" height="11" fill="#f6f8fc" stroke="#6e7a90"/><rect x="2" y="5" width="5" height="2" fill="#4a7ab8"/><path d="M11.5,1 v6 M8.5,4 h6" stroke="#e0b020" stroke-width="1.6"/></svg>
<div class="a" style="left:987px;top:105px;width:16px;height:16px;border:1px solid #e6e4da;border-radius:2px;background:linear-gradient(135deg,#f8f7f2,#ebe9e0);box-shadow:1px 1px 0 #fbfaf6 inset"></div><svg class="a" style="left:987px;top:105px" width="16" height="16"><path d="M4.5,9.5 L8,6 L11.5,9.5" fill="none" stroke="#c6c4b8" stroke-width="2"/></svg>
<div class="a" style="left:987px;top:585px;width:16px;height:16px;border:1px solid #e6e4da;border-radius:2px;background:linear-gradient(135deg,#f8f7f2,#ebe9e0);box-shadow:1px 1px 0 #fbfaf6 inset"></div><svg class="a" style="left:987px;top:585px" width="16" height="16"><path d="M4.5,6.5 L8,10 L11.5,6.5" fill="none" stroke="#c6c4b8" stroke-width="2"/></svg>
<div class="a" style="left:270px;top:602px;width:16px;height:16px;border:1px solid #e6e4da;border-radius:2px;background:linear-gradient(135deg,#f8f7f2,#ebe9e0);box-shadow:1px 1px 0 #fbfaf6 inset"></div><svg class="a" style="left:270px;top:602px" width="16" height="16"><path d="M9.5,4.5 L6,8 L9.5,11.5" fill="none" stroke="#c6c4b8" stroke-width="2"/></svg>
<div class="a" style="left:970px;top:602px;width:16px;height:16px;border:1px solid #e6e4da;border-radius:2px;background:linear-gradient(135deg,#f8f7f2,#ebe9e0);box-shadow:1px 1px 0 #fbfaf6 inset"></div><svg class="a" style="left:970px;top:602px" width="16" height="16"><path d="M6.5,4.5 L10,8 L6.5,11.5" fill="none" stroke="#c6c4b8" stroke-width="2"/></svg>
<div class="a" style="left:1001px;top:663px;width:16px;height:14px;border:1px solid #e6e4da;border-radius:2px;background:linear-gradient(135deg,#f8f7f2,#ebe9e0);box-shadow:1px 1px 0 #fbfaf6 inset"></div><svg class="a" style="left:1001px;top:663px" width="16" height="16"><path d="M4.5,9.5 L8,6 L11.5,9.5" fill="none" stroke="#c6c4b8" stroke-width="2"/></svg>
<div class="a" style="left:1001px;top:677px;width:16px;height:15px;border:1px solid #e6e4da;border-radius:2px;background:linear-gradient(135deg,#f8f7f2,#ebe9e0);box-shadow:1px 1px 0 #fbfaf6 inset"></div><svg class="a" style="left:1001px;top:677px" width="16" height="16"><path d="M4.5,6.5 L8,10 L11.5,6.5" fill="none" stroke="#c6c4b8" stroke-width="2"/></svg>
<div class="a" style="left:231px;top:692px;width:16px;height:16px;border:1px solid #e6e4da;border-radius:2px;background:linear-gradient(135deg,#f8f7f2,#ebe9e0);box-shadow:1px 1px 0 #fbfaf6 inset"></div><svg class="a" style="left:231px;top:692px" width="16" height="16"><path d="M9.5,4.5 L6,8 L9.5,11.5" fill="none" stroke="#c6c4b8" stroke-width="2"/></svg>
<div class="a" style="left:983px;top:692px;width:16px;height:16px;border:1px solid #e6e4da;border-radius:2px;background:linear-gradient(135deg,#f8f7f2,#ebe9e0);box-shadow:1px 1px 0 #fbfaf6 inset"></div><svg class="a" style="left:983px;top:692px" width="16" height="16"><path d="M6.5,4.5 L10,8 L6.5,11.5" fill="none" stroke="#c6c4b8" stroke-width="2"/></svg>
<!-- STATUS -->
<div class="grip" style="left:9px;top:718px;height:15px;opacity:.7"></div>
<div class="grip" style="left:765px;top:718px;height:15px;opacity:.7"></div>
<div class="t" style="left:85px;top:718px;font-size:12px;letter-spacing:-0.1px">models - phpblog/app</div>
<div class="a" style="left:0;top:737px;width:1024px;height:5px;background:linear-gradient(#e6eef6 0,#e6eef6 1px,#2460c8 1px,#2460c8 2px,#3d8ae8 2px,#3a86e6)"></div>
<div class="a" style="left:915px;top:737px;width:109px;height:5px;background:linear-gradient(#e6eef6 0,#e6eef6 1px,#0c70c8 1px,#0c70c8 2px,#1ea6f2 2px,#17a0ee);border-left:1px solid #0c3e9a"></div>
<div class="a" style="left:0;top:737px;width:107px;height:5px;background:linear-gradient(#e6f2e0 0,#e6f2e0 1px,#348a3a 1px,#348a3a 2px,#6ec06e 2px,#66b866)"></div>
</body></html>
